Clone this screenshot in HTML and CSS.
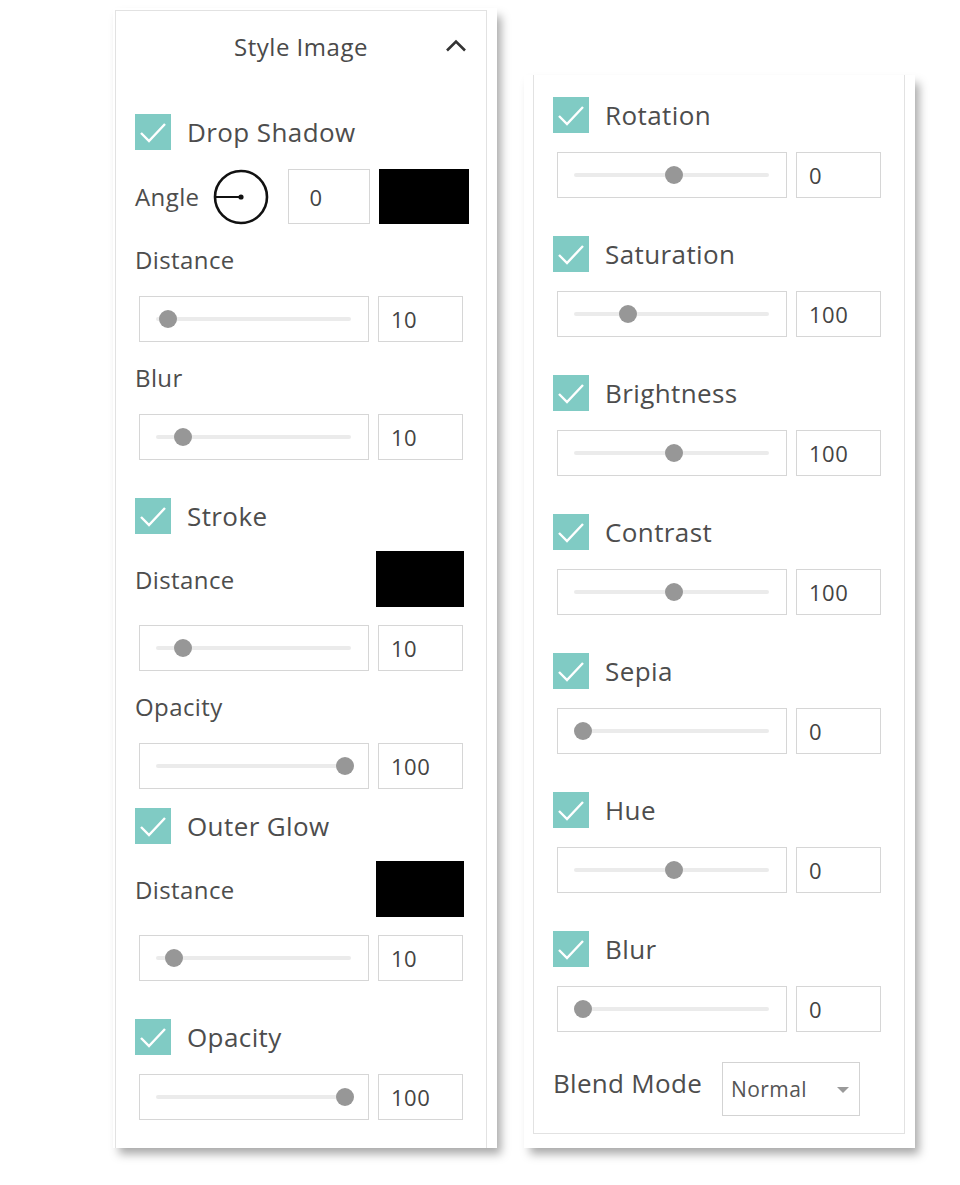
FILE: index.html
```html
<!DOCTYPE html>
<html>
<head>
<meta charset="utf-8">
<link rel="stylesheet" href="styles.css">
</head>
<body>
<div class="page">
  <div class="card card-left">
    <div class="panel panel-left">
      <div class="header">
        <span></span>
        <span class="title">Style Image</span>
        <svg class="chev" width="22" height="13" viewBox="0 0 22 13"><path d="M2 11.5 L11 2.5 L20 11.5" fill="none" stroke="#333" stroke-width="2.6"/></svg>
      </div>

      <div class="check-row first">
        <span class="cb"><svg width="36" height="36" viewBox="0 0 36 36"><path d="M6 19 L14 27 L30 10" fill="none" stroke="#fff" stroke-width="2.4"/></svg></span>
        <span class="cb-label">Drop Shadow</span>
      </div>
      <div class="angle-row">
        <span class="label">Angle</span>
        <svg class="dial" width="56" height="56" viewBox="0 0 56 56"><circle cx="28" cy="28" r="26" fill="none" stroke="#111" stroke-width="2.6"/><path d="M2 28 H28" stroke="#111" stroke-width="2"/><circle cx="28" cy="28" r="2.6" fill="#111"/></svg>
        <span class="num num-angle">0</span>
        <span class="swatch swatch-wide"></span>
      </div>
      <div class="label-row">Distance</div>
      <div class="field-row">
        <div class="slider"><div class="track"><span class="thumb" style="left:12px"></span></div></div>
        <span class="num">10</span>
      </div>
      <div class="label-row">Blur</div>
      <div class="field-row">
        <div class="slider"><div class="track"><span class="thumb" style="left:27px"></span></div></div>
        <span class="num">10</span>
      </div>

      <div class="check-row">
        <span class="cb"><svg width="36" height="36" viewBox="0 0 36 36"><path d="M6 19 L14 27 L30 10" fill="none" stroke="#fff" stroke-width="2.4"/></svg></span>
        <span class="cb-label">Stroke</span>
      </div>
      <div class="swatch-row">
        <span class="label">Distance</span>
        <span class="swatch"></span>
      </div>
      <div class="field-row">
        <div class="slider"><div class="track"><span class="thumb" style="left:27px"></span></div></div>
        <span class="num">10</span>
      </div>
      <div class="label-row">Opacity</div>
      <div class="field-row">
        <div class="slider"><div class="track"><span class="thumb" style="left:189px"></span></div></div>
        <span class="num">100</span>
      </div>

      <div class="check-row tight">
        <span class="cb"><svg width="36" height="36" viewBox="0 0 36 36"><path d="M6 19 L14 27 L30 10" fill="none" stroke="#fff" stroke-width="2.4"/></svg></span>
        <span class="cb-label">Outer Glow</span>
      </div>
      <div class="swatch-row">
        <span class="label">Distance</span>
        <span class="swatch"></span>
      </div>
      <div class="field-row">
        <div class="slider"><div class="track"><span class="thumb" style="left:18px"></span></div></div>
        <span class="num">10</span>
      </div>

      <div class="check-row">
        <span class="cb"><svg width="36" height="36" viewBox="0 0 36 36"><path d="M6 19 L14 27 L30 10" fill="none" stroke="#fff" stroke-width="2.4"/></svg></span>
        <span class="cb-label">Opacity</span>
      </div>
      <div class="field-row">
        <div class="slider"><div class="track"><span class="thumb" style="left:189px"></span></div></div>
        <span class="num">100</span>
      </div>
    </div>
  </div>

  <div class="card card-right">
    <div class="panel panel-right">
      <div class="check-row first-right">
        <span class="cb"><svg width="36" height="36" viewBox="0 0 36 36"><path d="M6 19 L14 27 L30 10" fill="none" stroke="#fff" stroke-width="2.4"/></svg></span>
        <span class="cb-label">Rotation</span>
      </div>
      <div class="field-row">
        <div class="slider"><div class="track"><span class="thumb" style="left:100px"></span></div></div>
        <span class="num">0</span>
      </div>

      <div class="check-row">
        <span class="cb"><svg width="36" height="36" viewBox="0 0 36 36"><path d="M6 19 L14 27 L30 10" fill="none" stroke="#fff" stroke-width="2.4"/></svg></span>
        <span class="cb-label">Saturation</span>
      </div>
      <div class="field-row">
        <div class="slider"><div class="track"><span class="thumb" style="left:54px"></span></div></div>
        <span class="num">100</span>
      </div>

      <div class="check-row">
        <span class="cb"><svg width="36" height="36" viewBox="0 0 36 36"><path d="M6 19 L14 27 L30 10" fill="none" stroke="#fff" stroke-width="2.4"/></svg></span>
        <span class="cb-label">Brightness</span>
      </div>
      <div class="field-row">
        <div class="slider"><div class="track"><span class="thumb" style="left:100px"></span></div></div>
        <span class="num">100</span>
      </div>

      <div class="check-row">
        <span class="cb"><svg width="36" height="36" viewBox="0 0 36 36"><path d="M6 19 L14 27 L30 10" fill="none" stroke="#fff" stroke-width="2.4"/></svg></span>
        <span class="cb-label">Contrast</span>
      </div>
      <div class="field-row">
        <div class="slider"><div class="track"><span class="thumb" style="left:100px"></span></div></div>
        <span class="num">100</span>
      </div>

      <div class="check-row">
        <span class="cb"><svg width="36" height="36" viewBox="0 0 36 36"><path d="M6 19 L14 27 L30 10" fill="none" stroke="#fff" stroke-width="2.4"/></svg></span>
        <span class="cb-label">Sepia</span>
      </div>
      <div class="field-row">
        <div class="slider"><div class="track"><span class="thumb" style="left:9px"></span></div></div>
        <span class="num">0</span>
      </div>

      <div class="check-row">
        <span class="cb"><svg width="36" height="36" viewBox="0 0 36 36"><path d="M6 19 L14 27 L30 10" fill="none" stroke="#fff" stroke-width="2.4"/></svg></span>
        <span class="cb-label">Hue</span>
      </div>
      <div class="field-row">
        <div class="slider"><div class="track"><span class="thumb" style="left:100px"></span></div></div>
        <span class="num">0</span>
      </div>

      <div class="check-row">
        <span class="cb"><svg width="36" height="36" viewBox="0 0 36 36"><path d="M6 19 L14 27 L30 10" fill="none" stroke="#fff" stroke-width="2.4"/></svg></span>
        <span class="cb-label">Blur</span>
      </div>
      <div class="field-row">
        <div class="slider"><div class="track"><span class="thumb" style="left:9px"></span></div></div>
        <span class="num">0</span>
      </div>

      <div class="blend-row">
        <span class="label blend-label">Blend Mode</span>
        <span class="select">Normal<span class="arrow"></span></span>
      </div>
    </div>
  </div>
</div>
</body>
</html>
```

FILE: styles.css
```css
* { box-sizing: border-box; }

body {
  margin: 0;
  background: #fff;
  font-family: "Open Sans", "Liberation Sans", sans-serif;
  color: #4f4f4f;
}

.page {
  display: flex;
  align-items: flex-start;
  padding: 8px 0 37px 113px;
}

.card {
  display: flex;
  flex-direction: column;
  background: #fff;
  box-shadow: 5px 7px 9px -1px rgba(0, 0, 0, 0.34);
}

.card-left {
  width: 384px;
  height: 1140px;
  padding: 2px 10px 0 2px;
}

.card-right {
  width: 391px;
  height: 1073px;
  margin: 67px 0 0 27px;
  padding: 0 10px 14px 9px;
}

.panel {
  flex: 1;
  border: 1px solid #e2e2e2;
  padding-left: 19px;
}

.panel-left {
  border-bottom: none;
}

.panel-right {
  border-top: none;
  border-bottom: 1px solid #e2e2e2;
}

.header {
  display: grid;
  grid-template-columns: 1fr auto 1fr;
  align-items: center;
  height: 70px;
  margin-left: -19px;
}

.title {
  font-size: 24px;
  letter-spacing: 0.5px;
  color: #4a4a4a;
}

.chev {
  justify-self: end;
  margin-right: 19px;
  margin-top: -2px;
}

.check-row {
  display: flex;
  align-items: center;
  gap: 16px;
  height: 36px;
  margin-top: 38px;
}

.check-row.first { margin-top: 33px; }
.check-row.first-right { margin-top: 22px; }
.check-row.tight { margin-top: 19px; }

.cb {
  width: 36px;
  height: 36px;
  background: #80cbc4;
  display: block;
  flex: none;
}

.cb svg { display: block; }

.cb-label {
  font-size: 26px;
  letter-spacing: 0.4px;
  color: #4d4d4d;
}

.label {
  font-size: 24px;
  letter-spacing: 0.4px;
  color: #4d4d4d;
}

.label-row {
  height: 36px;
  line-height: 36px;
  font-size: 24px;
  letter-spacing: 0.4px;
  color: #4d4d4d;
  margin-top: 18px;
}

.angle-row {
  display: flex;
  align-items: center;
  height: 55px;
  margin-top: 19px;
}

.dial {
  margin-left: 14px;
  flex: none;
}

.num {
  display: flex;
  align-items: center;
  width: 85px;
  height: 46px;
  border: 1px solid #d6d6d6;
  padding-left: 12px;
  font-size: 22px;
  letter-spacing: 0.5px;
  color: #444;
  flex: none;
}

.num-angle {
  width: 82px;
  height: 55px;
  margin-left: 19px;
  padding-left: 20px;
}

.swatch {
  display: block;
  width: 88px;
  height: 56px;
  background: #000;
  flex: none;
}

.swatch-wide {
  width: 90px;
  height: 55px;
  margin-left: 9px;
}

.swatch-row {
  display: flex;
  align-items: center;
  justify-content: space-between;
  height: 56px;
  margin-top: 17px;
  padding-right: 22px;
}

.field-row {
  display: flex;
  gap: 9px;
  padding-left: 4px;
  margin-top: 18px;
}

.check-row + .field-row { margin-top: 19px; }

.slider {
  display: flex;
  align-items: center;
  width: 230px;
  height: 46px;
  border: 1px solid #d6d6d6;
  padding: 0 17px 0 16px;
  flex: none;
}

.track {
  position: relative;
  flex: 1;
  height: 4px;
  background: #ebebeb;
  border-radius: 2px;
}

.thumb {
  position: absolute;
  top: -7px;
  width: 18px;
  height: 18px;
  margin-left: -9px;
  border-radius: 50%;
  background: #979797;
}

.blend-row {
  display: flex;
  align-items: center;
  gap: 20px;
  margin-top: 30px;
}

.blend-label {
  font-size: 26px;
  letter-spacing: 0.3px;
  margin-top: -12px;
}

.select {
  position: relative;
  display: flex;
  align-items: center;
  width: 138px;
  height: 54px;
  border: 1px solid #d3d3d3;
  padding-left: 8px;
  font-size: 21px;
  letter-spacing: 0.4px;
  color: #555;
}

.arrow {
  position: absolute;
  right: 10px;
  top: 24px;
  width: 0;
  height: 0;
  border-left: 6px solid transparent;
  border-right: 6px solid transparent;
  border-top: 6px solid #9a9a9a;
}
```
